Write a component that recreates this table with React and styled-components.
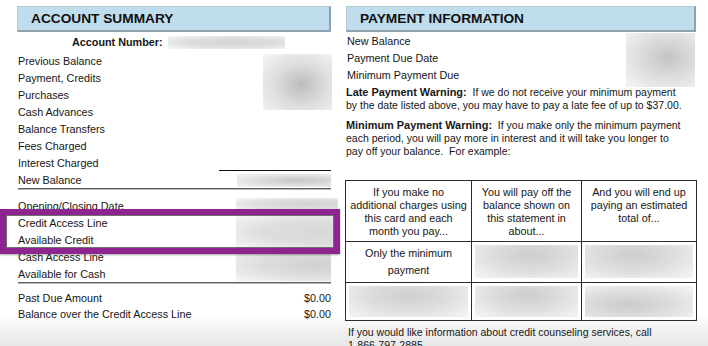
import React from "react";
import styled, { createGlobalStyle } from "styled-components";

const GlobalStyle = createGlobalStyle`
  body {
    margin: 0;
    background: #fff;
    font-family: "Liberation Sans", Arial, Helvetica, sans-serif;
  }
`;

const Page = styled.div`
  position: relative;
  width: 708px;
  height: 346px;
  overflow: hidden;
  box-sizing: border-box;
  padding: 6px 0 0 17px;
  display: flex;
  align-items: flex-start;
  gap: 15px;
  color: #161616;
  font-size: 10.8px;
  background: linear-gradient(to bottom, #fff 0, #fff 316px, #f1f1f1 330px, #e8e8e8 346px);
`;

const Column = styled.div`
  width: ${(p) => p.$w}px;
  display: flex;
  flex-direction: column;
`;

const SectionBar = styled.div`
  height: 26px;
  box-sizing: border-box;
  display: flex;
  align-items: center;
  padding-left: 13px;
  background: #bfdded;
  border: 1px solid #b4c9d3;
  border-right: 2px solid #8ea2ac;
  border-bottom: 2px solid #8ea2ac;
  font-weight: bold;
  font-size: 13.7px;
  color: #111;
`;

const AccountRow = styled.div`
  height: 20px;
  display: flex;
  align-items: center;
  gap: 5px;
  padding-left: 55px;
  font-weight: bold;
`;

const Rows = styled.div`
  display: grid;
  grid-template-columns: 1fr ${(p) => p.$value || 112}px;
  grid-auto-rows: ${(p) => p.$row || 17}px;
  align-items: center;
  margin-top: ${(p) => p.$top || 0}px;
`;

const Label = styled.div`
  grid-column: 1;
  padding-left: 1px;
  white-space: nowrap;
`;

const Amount = styled.div`
  grid-column: 2;
  text-align: right;
`;

const Slot = styled.div`
  grid-column: 2;
  grid-row: ${(p) => p.$rows};
  align-self: start;
  justify-self: ${(p) => (p.$left != null ? "start" : "end")};
  margin-top: ${(p) => p.$top || 0}px;
  margin-left: ${(p) => p.$left || 0}px;
  margin-right: ${(p) => p.$right || 0}px;
`;

const Rule = styled.div`
  grid-column: 2;
  grid-row: ${(p) => p.$row};
  align-self: end;
  border-bottom: 1px solid #111;
`;

const Divider = styled.div`
  height: 1px;
  margin: 0 0 1px 1px;
  background: #5e5e5e;
  box-shadow: 0 1px 0 #b8b8b8;
`;

const Blur = styled.div`
  width: ${(p) => p.$w}px;
  height: ${(p) => p.$h}px;
  background: radial-gradient(
    ellipse at ${(p) => p.$at || "60% 50%"},
    ${(p) => p.$deep || "#c8c8c8"} 0%,
    #dedede 50%,
    #efefef 85%,
    #f4f4f4 100%
  );
`;

const InfoRows = styled.div`
  display: grid;
  grid-template-columns: 1fr 69px;
  grid-template-rows: repeat(3, 17px);
  align-items: center;
  margin-right: 1px;
`;

const Para = styled.p`
  margin: ${(p) => p.$top || 0}px 0 0 0;
  font-size: 10.5px;
  line-height: 13px;
  white-space: nowrap;
  b {
    font-weight: bold;
    font-size: 10.9px;
  }
`;

const Table = styled.table`
  margin-top: 22px;
  border-collapse: collapse;
  width: 351px;
  table-layout: fixed;
  margin-left: -1px;
  td {
    border: 1px solid #2b2b2b;
    text-align: center;
    vertical-align: top;
    padding: 0;
  }
`;

const HeadCell = styled.td`
  height: 61px;
  box-sizing: border-box;
  padding-top: 5px !important;
  line-height: 13px;
`;

const BodyCell = styled.td`
  height: ${(p) => p.$h}px;
  box-sizing: border-box;
  line-height: 17px;
  padding: 3px !important;
`;

const CellBlur = styled(Blur)`
  width: 100%;
  height: ${(p) => p.$h}px;
`;

const Footer = styled.p`
  margin: 5px 0 0 2px;
  font-size: 10.5px;
  line-height: 13px;
  white-space: nowrap;
`;

const Highlight = styled.div`
  position: absolute;
  left: 0;
  top: 209px;
  width: 340px;
  height: 45px;
  box-sizing: border-box;
  border: 6px solid #8d2490;
  box-shadow: inset 0 0 0 1px #6f6f6f, 0 1px 2px rgba(0, 0, 0, 0.35);
  pointer-events: none;
`;

const App = () => {
  return (
    <>
      <GlobalStyle />
      <Page>
        <Column $w={314}>
          <SectionBar>ACCOUNT SUMMARY</SectionBar>
          <AccountRow>
            Account Number:
            <Blur $w={117} $h={13} $at="55% 50%" $deep="#d4d4d4" />
          </AccountRow>

          <Rows>
            <Label>Previous Balance</Label>
            <Label>Payment, Credits</Label>
            <Label>Purchases</Label>
            <Label>Cash Advances</Label>
            <Label>Balance Transfers</Label>
            <Label>Fees Charged</Label>
            <Label>Interest Charged</Label>
            <Slot $rows="1 / span 4" $top={2} $right={-1}>
              <Blur $w={69} $h={56} $at="55% 55%" $deep="#bdbdbd" />
            </Slot>
            <Rule $row={7} />
          </Rows>

          <Rows>
            <Label>New Balance</Label>
            <Slot $rows="1" $top={3}>
              <Blur $w={94} $h={13} $at="65% 50%" $deep="#c6c6c6" />
            </Slot>
          </Rows>
          <Divider />

          <Rows $top={7}>
            <Label>Opening/Closing Date</Label>
            <Label>Credit Access Line</Label>
            <Label>Available Credit</Label>
            <Label>Cash Access Line</Label>
            <Label>Available for Cash</Label>
            <Slot $rows="1" $top={1} $left={17}>
              <Blur $w={102} $h={12} $at="70% 50%" $deep="#d2d2d2" />
            </Slot>
            <Slot $rows="2 / span 2" $top={2} $left={17}>
              <Blur $w={102} $h={32} $at="85% 50%" $deep="#d8d8d8" />
            </Slot>
            <Slot $rows="4 / span 2" $top={6} $left={17}>
              <Blur $w={95} $h={27} $at="85% 40%" $deep="#d0d0d0" />
            </Slot>
          </Rows>
          <Divider />

          <Rows $top={6} $row={16}>
            <Label>Past Due Amount</Label>
            <Amount>$0.00</Amount>
            <Label>Balance over the Credit Access Line</Label>
            <Amount>$0.00</Amount>
          </Rows>
        </Column>

        <Column $w={350}>
          <SectionBar>PAYMENT INFORMATION</SectionBar>
          <InfoRows>
            <Label>New Balance</Label>
            <Label>Payment Due Date</Label>
            <Label>Minimum Payment Due</Label>
            <Slot $rows="1 / span 3" $top={1}>
              <Blur $w={69} $h={54} $at="60% 45%" $deep="#c4c4c4" />
            </Slot>
          </InfoRows>

          <Para $top={3}>
            <b>Late Payment Warning:</b>&nbsp; If we do not receive your minimum payment
            <br />
            by the date listed above, you may have to pay a late fee of up to $37.00.
          </Para>
          <Para $top={7}>
            <b>Minimum Payment Warning:</b>&nbsp; If you make only the minimum payment
            <br />
            each period, you will pay more in interest and it will take you longer to
            <br />
            pay off your balance.&nbsp; For example:
          </Para>

          <Table>
            <colgroup>
              <col style={{ width: 126 }} />
              <col style={{ width: 110 }} />
              <col style={{ width: 115 }} />
            </colgroup>
            <tbody>
              <tr>
                <HeadCell>
                  If you make no
                  <br />
                  additional charges using
                  <br />
                  this card and each
                  <br />
                  month you pay...
                </HeadCell>
                <HeadCell>
                  You will pay off the
                  <br />
                  balance shown on
                  <br />
                  this statement in
                  <br />
                  about...
                </HeadCell>
                <HeadCell>
                  And you will end up
                  <br />
                  paying an estimated
                  <br />
                  total of...
                </HeadCell>
              </tr>
              <tr>
                <BodyCell $h={40}>
                  Only the minimum
                  <br />
                  payment
                </BodyCell>
                <BodyCell $h={40}>
                  <CellBlur $h={33} $at="55% 30%" $deep="#cdcdcd" />
                </BodyCell>
                <BodyCell $h={40}>
                  <CellBlur $h={33} $at="45% 30%" $deep="#cdcdcd" />
                </BodyCell>
              </tr>
              <tr>
                <BodyCell $h={38}>
                  <CellBlur $h={31} $at="50% 30%" $deep="#cfcfcf" />
                </BodyCell>
                <BodyCell $h={38}>
                  <CellBlur $h={31} $at="50% 30%" $deep="#cdcdcd" />
                </BodyCell>
                <BodyCell $h={38}>
                  <CellBlur $h={31} $at="40% 60%" $deep="#cbcbcb" />
                </BodyCell>
              </tr>
            </tbody>
          </Table>

          <Footer>
            If you would like information about credit counseling services, call
            <br />
            1-866-797-2885
          </Footer>
        </Column>

        <Highlight />
      </Page>
    </>
  );
};

export default App;
